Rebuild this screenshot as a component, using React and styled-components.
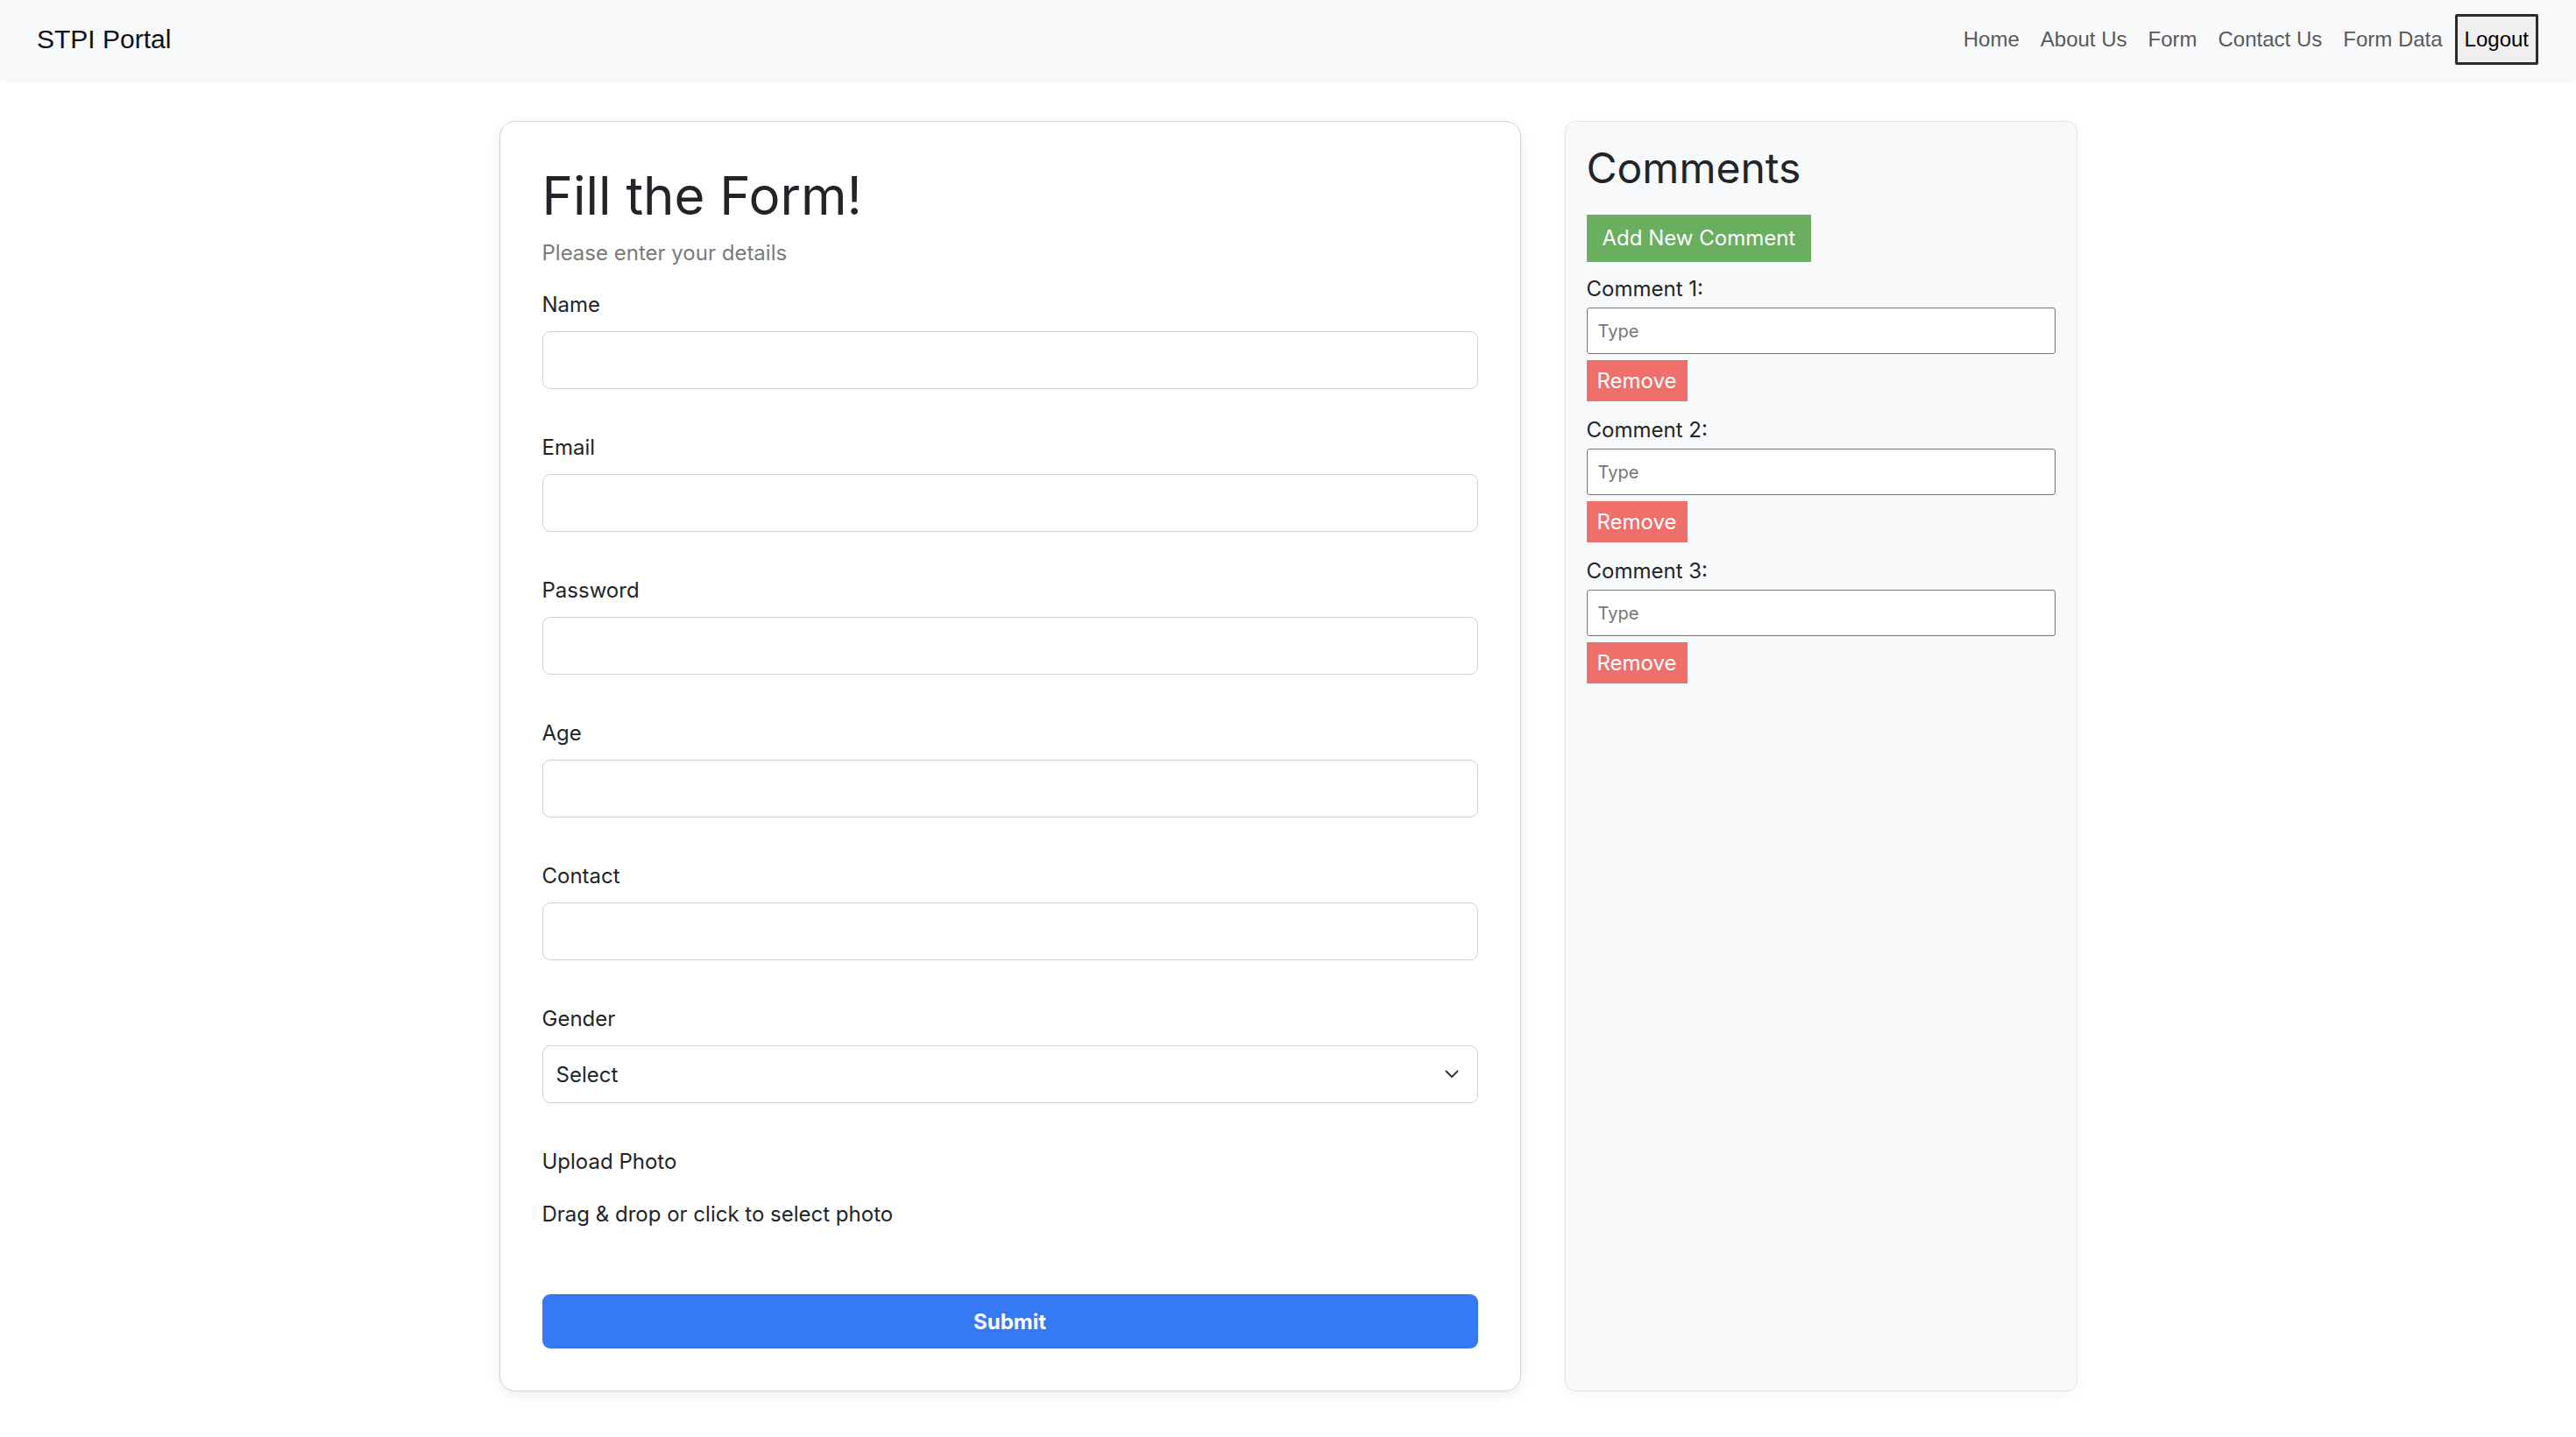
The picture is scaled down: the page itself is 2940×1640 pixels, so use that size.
import React from "react";
import styled, { createGlobalStyle } from "styled-components";

const Global = createGlobalStyle`
  * { box-sizing: border-box; }
  html, body { margin: 0; padding: 0; background: #ffffff; }
  body {
    font-family: Inter, "Noto Sans", sans-serif;
    font-size: 24px;
    line-height: 36px;
    color: #212529;
  }
`;

const NavBar = styled.nav`
  height: 90px;
  background: #f8f9fa;
  box-shadow: 0 2px 6px rgba(0, 0, 0, 0.06);
  display: flex;
  align-items: center;
  justify-content: space-between;
  padding: 0 43px 0 42px;
  font-family: "Liberation Sans", Arial, sans-serif;
`;

const Brand = styled.a`
  font-size: 30px;
  line-height: 36px;
  color: #111;
  text-decoration: none;
`;

const NavLinks = styled.div`
  display: flex;
  align-items: center;
`;

const NavLink = styled.a`
  font-size: 24px;
  line-height: 36px;
  color: #595959;
  text-decoration: none;
  padding: 0 12px;
`;

const LogoutButton = styled.button`
  margin-left: 2px;
  font-family: "Liberation Sans", Arial, sans-serif;
  font-size: 24px;
  line-height: 36px;
  color: #000;
  background: #efefef;
  border: 3px solid #2b2b2b;
  border-radius: 2px;
  padding: 8px 8px;
`;

const Main = styled.main`
  display: flex;
  justify-content: center;
  align-items: stretch;
  gap: 50px;
  padding: 48px 0 48px;
`;

const FormCard = styled.section`
  width: 1166px;
  background: #fff;
  border: 1px solid #d3d3d3;
  border-radius: 18px;
  box-shadow: 0 4px 16px rgba(0, 0, 0, 0.07);
  padding: 48px;
`;

const Title = styled.h1`
  margin: 0 0 12px;
  font-size: 60px;
  line-height: 72px;
  font-weight: 400;
  color: #212529;
`;

const Subtitle = styled.p`
  margin: 0 0 23px;
  color: #7a7a7a;
`;

const Group = styled.div`
  margin-bottom: 49px;
`;

const Label = styled.label`
  display: block;
  margin-bottom: 12px;
  color: #212529;
`;

const TextInput = styled.input`
  display: block;
  width: 100%;
  height: 66px;
  border: 1px solid #cfd2d5;
  border-radius: 9px;
  padding: 0 18px;
  font-family: Inter, sans-serif;
  font-size: 24px;
  background: #fff;
  outline: none;
`;

const SelectWrap = styled.div`
  position: relative;
`;

const Select = styled.select`
  display: block;
  width: 100%;
  height: 66px;
  border: 1px solid #cfd2d5;
  border-radius: 9px;
  padding: 0 15px;
  font-family: Inter, sans-serif;
  font-size: 24px;
  color: #212529;
  background: #fff;
  appearance: none;
  -webkit-appearance: none;
  outline: none;
`;

const Chevron = styled.svg`
  position: absolute;
  right: 22px;
  top: 50%;
  transform: translateY(-50%);
  width: 16px;
  height: 10px;
  pointer-events: none;
`;

const Dropzone = styled.div`
  padding: 12px 0 24px;
  cursor: pointer;
`;

const DropText = styled.p`
  margin: 0;
  color: #212529;
`;

const SubmitButton = styled.button`
  display: block;
  width: 100%;
  height: 62px;
  border: none;
  border-radius: 9px;
  background: #3679f5;
  color: #fff;
  font-family: Inter, sans-serif;
  font-weight: 700;
  font-size: 24px;
`;

const CommentsCard = styled.aside`
  width: 585px;
  background: #f8f9fa;
  border: 1px solid #e3e5e8;
  border-radius: 12px;
  box-shadow: 0 4px 16px rgba(0, 0, 0, 0.04);
  padding: 24px;
`;

const CommentsTitle = styled.h2`
  margin: 0 0 24px;
  font-size: 48px;
  line-height: 58px;
  font-weight: 400;
  color: #212529;
`;

const AddButton = styled.button`
  display: inline-block;
  height: 54px;
  padding: 0 18px;
  border: none;
  border-radius: 0;
  background: #6aae5f;
  color: #fff;
  font-family: Inter, sans-serif;
  font-size: 24px;
  line-height: 54px;
  margin-bottom: 13px;
`;

const CommentBlock = styled.div`
  margin-bottom: 15px;
`;

const CommentLabel = styled.label`
  display: block;
  margin-bottom: 3px;
  color: #212529;
`;

const CommentInput = styled.input`
  display: block;
  width: 100%;
  height: 53px;
  border: 1px solid #767676;
  border-radius: 3px;
  padding: 0 12px;
  font-family: Inter, sans-serif;
  font-size: 20px;
  background: #fff;
  outline: none;
  &::placeholder {
    color: #757575;
  }
`;

const RemoveButton = styled.button`
  display: block;
  margin-top: 7px;
  height: 47px;
  padding: 0 12px;
  border: none;
  border-radius: 0;
  background: #ef706b;
  color: #fff;
  font-family: Inter, sans-serif;
  font-size: 24px;
  line-height: 47px;
`;

const fields = ["Name", "Email", "Password", "Age", "Contact"];
const types = { Email: "email", Password: "password", Age: "number", Contact: "tel" };

export default function App() {
  return (
    <>
      <Global />
      <NavBar>
        <Brand href="#">STPI Portal</Brand>
        <NavLinks>
          <NavLink href="#">Home</NavLink>
          <NavLink href="#">About Us</NavLink>
          <NavLink href="#">Form</NavLink>
          <NavLink href="#">Contact Us</NavLink>
          <NavLink href="#">Form Data</NavLink>
          <LogoutButton>Logout</LogoutButton>
        </NavLinks>
      </NavBar>
      <Main>
        <FormCard>
          <Title>Fill the Form!</Title>
          <Subtitle>Please enter your details</Subtitle>
          {fields.map((f) => (
            <Group key={f}>
              <Label>{f}</Label>
              <TextInput type={types[f] || "text"} />
            </Group>
          ))}
          <Group>
            <Label>Gender</Label>
            <SelectWrap>
              <Select defaultValue="">
                <option value="">Select</option>
                <option value="male">Male</option>
                <option value="female">Female</option>
              </Select>
              <Chevron viewBox="0 0 16 10">
                <path d="M1.5 1.5 L8 8 L14.5 1.5" fill="none" stroke="#343a40" strokeWidth="2" strokeLinecap="round" strokeLinejoin="round" />
              </Chevron>
            </SelectWrap>
          </Group>
          <Group>
            <Label>Upload Photo</Label>
            <Dropzone>
              <DropText>Drag &amp; drop or click to select photo</DropText>
            </Dropzone>
          </Group>
          <SubmitButton>Submit</SubmitButton>
        </FormCard>
        <CommentsCard>
          <CommentsTitle>Comments</CommentsTitle>
          <AddButton>Add New Comment</AddButton>
          {[1, 2, 3].map((n) => (
            <CommentBlock key={n}>
              <CommentLabel>Comment {n}:</CommentLabel>
              <CommentInput placeholder="Type" />
              <RemoveButton>Remove</RemoveButton>
            </CommentBlock>
          ))}
        </CommentsCard>
      </Main>
    </>
  );
}
